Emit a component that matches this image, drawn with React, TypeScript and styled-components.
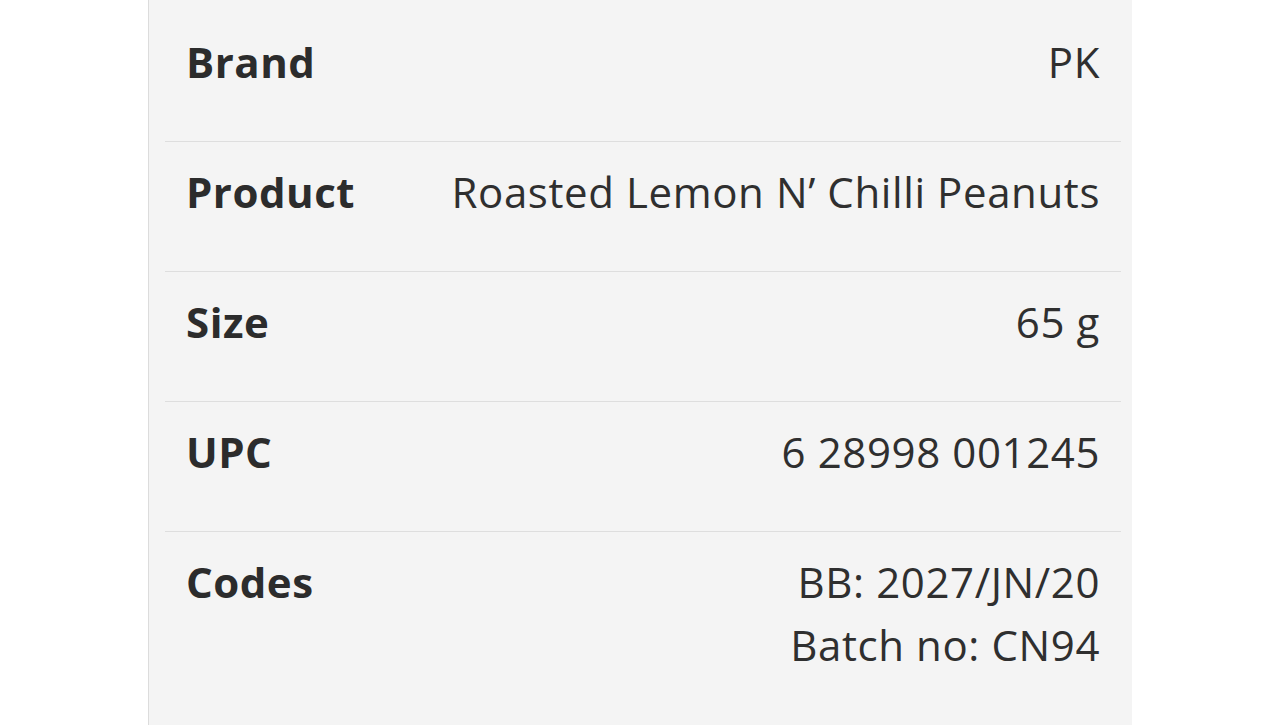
import styled, { createGlobalStyle } from 'styled-components';

const GlobalStyle = createGlobalStyle`
  html, body {
    margin: 0;
    padding: 0;
    background: #fff;
  }
  body {
    font-family: 'Open Sans', 'Liberation Sans', sans-serif;
    color: #333;
  }
`;

const Page = styled.div`
  width: 1280px;
  height: 725px;
  overflow: hidden;
  display: flex;
  justify-content: flex-start;
  padding-left: 148px;
  box-sizing: border-box;
`;

const Panel = styled.dl`
  margin: 0;
  width: 984px;
  min-height: 725px;
  box-sizing: border-box;
  background: #f4f4f4;
  border-left: 1px solid #dcdcdc;
  padding: 12px 11px 0 16px;
  display: flex;
  flex-direction: column;
`;

const Row = styled.div<{ $last?: boolean }>`
  display: flex;
  justify-content: space-between;
  align-items: flex-start;
  gap: 40px;
  padding: 18px 21px 48px;
  border-bottom: ${({ $last }) => ($last ? 'none' : '1px solid #dedede')};
  font-size: 42px;
  line-height: 63px;
`;

const Label = styled.dt`
  margin: 0;
  font-weight: 700;
  color: #2c2c2c;
  letter-spacing: 0.5px;
  white-space: nowrap;
`;

const Value = styled.dd`
  margin: 0;
  font-weight: 400;
  color: #2f2f2f;
  letter-spacing: 0.6px;
  text-align: right;
`;

const Line = styled.div`
  white-space: nowrap;
`;

const rows: { label: string; value: string[] }[] = [
  { label: 'Brand', value: ['PK'] },
  { label: 'Product', value: ['Roasted Lemon N’ Chilli Peanuts'] },
  { label: 'Size', value: ['65 g'] },
  { label: 'UPC', value: ['6 28998 001245'] },
  { label: 'Codes', value: ['BB: 2027/JN/20', 'Batch no: CN94'] },
];

const App = () => (
  <>
    <GlobalStyle />
    <Page>
      <Panel>
        {rows.map((r, i) => (
          <Row key={r.label} $last={i === rows.length - 1}>
            <Label>{r.label}</Label>
            <Value>
              {r.value.map((v) => (
                <Line key={v}>{v}</Line>
              ))}
            </Value>
          </Row>
        ))}
      </Panel>
    </Page>
  </>
);

export default App;
